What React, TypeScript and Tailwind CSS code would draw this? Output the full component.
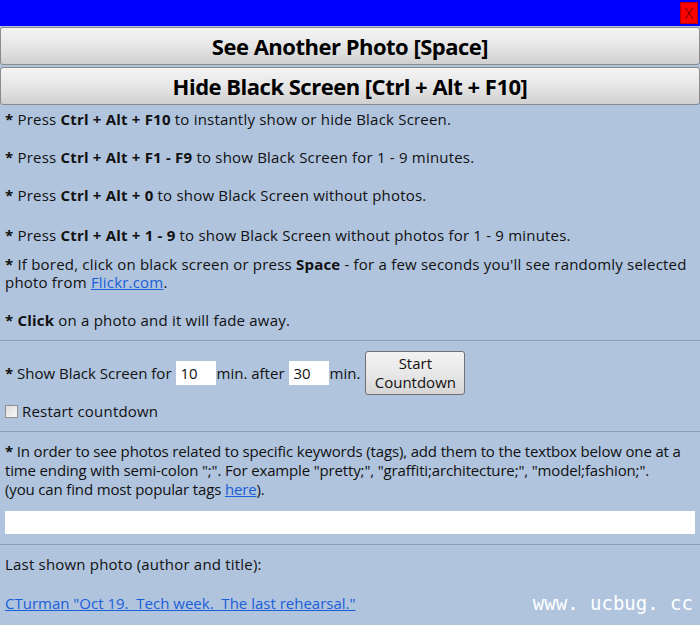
import React from 'react';

const Sep = () => <div className="h-px bg-[#8e9db3] w-full" />;

const App: React.FC = () => {
  const font = { fontFamily: '"Open Sans", "Noto Sans", sans-serif' };
  return (
    <div className="w-[700px] h-[625px] bg-[#b0c4de] text-[15px] tracking-[0.2px] text-[#111] relative overflow-hidden" style={font}>
      <div className="h-[26px] bg-[#0000ff] flex justify-end items-start pt-[2px] pr-[2px]">
        <div className="w-[18px] h-[22px] bg-[#ff0000] border border-[#b00] text-[#400] text-[15px] leading-[20px] text-center font-light">X</div>
      </div>

      <div className="pt-[1px] flex flex-col gap-[2px]">
        <button className="h-[38px] w-full border border-[#8a8a8a] rounded-[3px] bg-gradient-to-b from-[#f4f4f4] via-[#e6e6e6] to-[#d0d0d0] text-[22px] leading-[34px] font-bold text-black tracking-[-0.5px]">
          See Another Photo [Space]
        </button>
        <button className="h-[38px] w-full border border-[#8a8a8a] rounded-[3px] bg-gradient-to-b from-[#f4f4f4] via-[#e6e6e6] to-[#d0d0d0] text-[22px] leading-[34px] font-bold text-black tracking-[-0.5px]">
          Hide Black Screen [Ctrl + Alt + F10]
        </button>
      </div>

      <div className="px-[5px] leading-[19px]">
        <p className="mt-[5px]"><b>*</b> Press <b>Ctrl + Alt + F10</b> to instantly show or hide Black Screen.</p>
        <p className="mt-[19px]"><b>*</b> Press <b>Ctrl + Alt + F1 - F9</b> to show Black Screen for 1 - 9 minutes.</p>
        <p className="mt-[19px]"><b>*</b> Press <b>Ctrl + Alt + 0</b> to show Black Screen without photos.</p>
        <p className="mt-[21px]"><b>*</b> Press <b>Ctrl + Alt + 1 - 9</b> to show Black Screen without photos for 1 - 9 minutes.</p>
        <p className="mt-[10px] leading-[18px]">
          <b>*</b> If bored, click on black screen or press <b>Space</b> - for a few seconds you'll see randomly selected photo from{' '}
          <a className="text-[#1a5ed8] underline">Flickr.com</a>.
        </p>
        <p className="mt-[20px]"><b>* Click</b> on a photo and it will fade away.</p>
      </div>

      <div className="mt-[10px]"><Sep /></div>

      <div className="px-[5px] mt-[10px] flex items-center h-[44px] tracking-[0px]">
        <span><b>*</b> Show Black Screen for</span>
        <input readOnly value="10" className="ml-[4px] w-[40px] h-[24px] bg-white px-[5px] outline-none" />
        <span className="ml-[1px]">min. after</span>
        <input readOnly value="30" className="ml-[4px] w-[40px] h-[24px] bg-white px-[5px] outline-none" />
        <span className="ml-[1px]">min.</span>
        <button className="ml-[5px] w-[100px] h-[44px] border border-[#707070] rounded-[3px] bg-gradient-to-b from-[#f2f2f2] via-[#e8e8e8] to-[#d6d6d6] leading-[19px] text-[15px]">
          Start<br />Countdown
        </button>
      </div>

      <label className="px-[5px] mt-[6px] flex items-center h-[20px]">
        <span className="w-[13px] h-[13px] border border-[#8f8f8f] bg-gradient-to-br from-[#dcdcdc] to-[#f8f8f8] mr-[4px]" />
        Restart countdown
      </label>

      <div className="mt-[10px]"><Sep /></div>

      <p className="px-[5px] mt-[10px] leading-[19px] tracking-[-0.15px]">
        <b>*</b> In order to see photos related to specific keywords (tags), add them to the textbox below one at a time ending with semi-colon ";". For example "pretty;", "graffiti;architecture;", "model;fashion;". <br />(you can find most popular tags{' '}
        <a className="text-[#1a5ed8] underline">here</a>).
      </p>

      <div className="px-[5px] mt-[12px]">
        <div className="h-[23px] bg-white w-full" />
      </div>

      <div className="mt-[10px]"><Sep /></div>

      <p className="px-[5px] mt-[10px] leading-[19px]">Last shown photo (author and title):</p>
      <p className="px-[5px] mt-[20px] leading-[19px] flex justify-between items-center">
        <a className="text-[#1a5ed8] underline tracking-[0px]">CTurman "Oct 19.&nbsp; Tech week.&nbsp; The last rehearsal."</a>
        <span className="text-white text-[19px] tracking-[0px] mr-[2px]" style={{ fontFamily: '"DejaVu Sans Mono", monospace' }}>www. ucbug. cc</span>
      </p>
    </div>
  );
};

export default App;
